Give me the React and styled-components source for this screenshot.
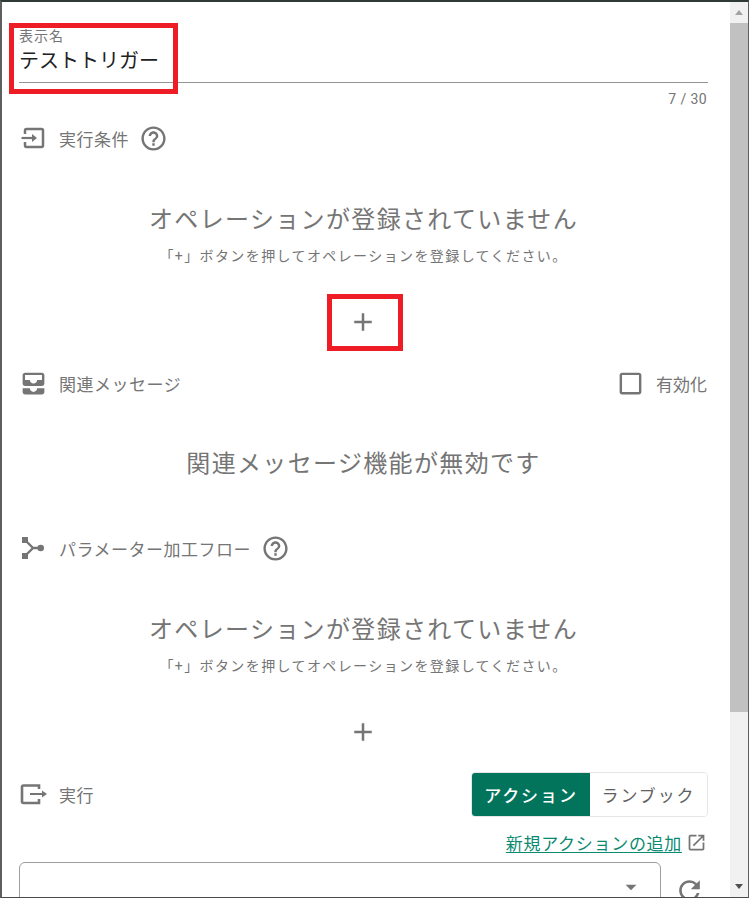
import React from "react";
import styled, { createGlobalStyle } from "styled-components";
import { MdAllInbox, MdHelpOutline, MdAdd, MdCheckBoxOutlineBlank, MdOpenInNew, MdRefresh, MdArrowDropDown } from "react-icons/md";

const Global = createGlobalStyle`
  html, body { margin: 0; padding: 0; background: #fff; }
  body { font-family: "Roboto", "Noto Sans CJK JP", sans-serif; overflow: hidden; }
`;
const Frame = styled.div`
  position: relative; width: 749px; height: 898px; box-sizing: border-box; overflow: hidden;
  display: flex; background: #fff;
  border-top: 2px solid #2f3a36; border-left: 2px solid #5f5f5f; border-bottom: 1px solid #4a4a4a; border-right: 1px solid #5f5f5f;
`;
const Content = styled.main`
  flex: 1; min-width: 0; overflow: hidden; box-sizing: border-box; padding: 0 22px 0 17px;
`;
const Scrollbar = styled.div`
  width: 18px; flex: none; background: #f1f1f1; display: flex; flex-direction: column;
`;
const ScrollBtn = styled.div`
  height: 21px; flex: none; display: flex; align-items: center; justify-content: center;
`;
const Arrow = styled.i`
  width: 0; height: 0; border-left: 4.5px solid transparent; border-right: 4.5px solid transparent;
  ${p => p.$up ? "border-bottom: 5px solid #a3a3a3;" : "border-top: 5px solid #505050;"}
`;
const Thumb = styled.div` height: 689px; flex: none; background: #c1c1c1; `;
const Track = styled.div` flex: 1; `;
const NameField = styled.div`
  height: 81px; box-sizing: border-box; border-bottom: 1px solid #949494; padding-top: 27px;
`;
const FieldLabel = styled.div`
  font-size: 14px; line-height: 15px; color: #757575; letter-spacing: 1px;
`;
const FieldValue = styled.div`
  font-size: 20px; line-height: 28px; color: #212121; margin-top: 3px;
`;
const Counter = styled.div`
  text-align: right; font-size: 14px; line-height: 16px; letter-spacing: 0.4px; color: #757575; margin: 8px 1px 0 0;
`;
const Head = styled.div`
  display: flex; align-items: center; height: 28px; color: #757575;
  margin-top: ${p => p.$top}px;
`;
const HeadIcon = styled.span`
  width: 40px; flex: none; display: flex; align-items: center; font-size: 29px; color: #757575;
`;
const HeadText = styled.span`
  font-size: 17px; letter-spacing: 0.5px; color: #757575;
`;
const Help = styled.span`
  display: flex; margin-left: 10px; font-size: 29px; color: #757575;
`;
const Spacer = styled.span` flex: 1; `;
const CheckRow = styled.span`
  display: flex; align-items: center; gap: 11px; font-size: 17px; color: #757575; padding-right: 1px;
`;
const CheckIcon = styled.span`
  display: flex; font-size: 29px; color: #757575;
`;
const Empty = styled.div`
  text-align: center; color: #757575; margin-top: ${p => p.$top}px;
`;
const EmptyTitle = styled.div`
  font-size: 24px; line-height: 34px; letter-spacing: 1.35px;
`;
const EmptySub = styled.div`
  font-size: 14px; line-height: 20px; letter-spacing: 1.4px; margin-top: 9px;
`;
const AddBtn = styled.div`
  display: flex; justify-content: center; font-size: 30px; color: #757575; margin-top: ${p => p.$top}px; padding-right: 1px;
`;
const ExecHead = styled.div`
  display: flex; align-items: center; height: 46px; margin-top: ${p => p.$top}px;
`;
const Toggle = styled.div`
  display: flex; height: 45px; border: 1px solid #e6e6e6; border-radius: 4px; box-sizing: border-box; overflow: hidden;
`;
const ToggleItem = styled.div`
  display: flex; align-items: center; justify-content: center; box-sizing: border-box; font-size: 17px; letter-spacing: 1.9px;
  width: ${p => p.$w}px;
  background: ${p => (p.$on ? "#03745c" : "#fff")};
  color: ${p => (p.$on ? "#fff" : "#616161")};
  font-weight: ${p => (p.$on ? 500 : 400)};
`;
const LinkRow = styled.div`
  display: flex; justify-content: flex-end; align-items: center; margin-top: 12px; height: 26px; gap: 4px; padding-right: 1px;
`;
const Link = styled.a`
  font-size: 17px; letter-spacing: 0.7px; color: #0a8a70; text-decoration: underline; text-underline-offset: 2px;
`;
const LinkIcon = styled.span` display: flex; font-size: 21px; color: #757575; `;
const SelectRow = styled.div`
  display: flex; margin-top: 7px; gap: 13px; padding-right: 3px;
`;
const Select = styled.div`
  flex: 1; height: 60px; box-sizing: border-box; border: 1px solid #9e9e9e; border-radius: 6px;
  display: flex; justify-content: flex-end; padding: 11px 16px 0 0; font-size: 26px; color: #757575;
`;
const Refresh = styled.span`
  width: 31px; display: flex; font-size: 31px; color: #757575; padding-top: 13px;
`;
const Mark = styled.div`
  position: absolute; box-sizing: border-box; border: 5px solid #ee1c25;
  left: ${p => p.$x}px; top: ${p => p.$y}px; width: ${p => p.$w}px; height: ${p => p.$h}px;
`;
const InputIcon = () => (
  <svg width="28" height="24" viewBox="0 0 28 24" fill="none">
    <path d="M6 8V4.500a1.500 1.500 0 0 1 1.500-1.500H22.500a1.500 1.500 0 0 1 1.500 1.500V19.500a1.500 1.500 0 0 1-1.500 1.500H7.500a1.500 1.500 0 0 1-1.500-1.500V16" stroke="#757575" strokeWidth="2.500" />
    <path d="M2.500 12H14" stroke="#757575" strokeWidth="2.200" />
    <path d="M13 8L18 12L13 16Z" fill="#757575" />
  </svg>
);
const ExitIcon = () => (
  <svg width="29" height="24" viewBox="0 0 29 24" fill="none">
    <path d="M20 7V3.500H4.500A1.500 1.500 0 0 0 3 5V19.500A1.500 1.500 0 0 0 4.500 21H20V17" stroke="#757575" strokeWidth="2.600" />
    <path d="M11 12H24" stroke="#757575" strokeWidth="2" />
    <path d="M23 8.500L28 12L23 15.500Z" fill="#757575" />
  </svg>
);
const FlowIcon = () => (
  <svg width="28" height="24" viewBox="0 0 28 24" fill="none">
    <rect x="3" y="1" width="6" height="6" fill="#757575" />
    <rect x="3" y="17" width="6" height="6" fill="#757575" />
    <circle cx="21.700" cy="12" r="3.300" fill="#757575" />
    <path d="M7 5L14 12L7 19M14 12H19" stroke="#757575" strokeWidth="2.400" />
  </svg>
);
const Section = ({ top }) => (
  <Empty $top={top}>
    <EmptyTitle>オペレーションが登録されていません</EmptyTitle>
    <EmptySub>「+」ボタンを押してオペレーションを登録してください。</EmptySub>
  </Empty>
);
export default function App() {
  return (
    <Frame>
      <Global />
      <Content>
        <NameField>
          <FieldLabel>表示名</FieldLabel>
          <FieldValue>テストトリガー</FieldValue>
        </NameField>
        <Counter>7 / 30</Counter>
        <Head $top={17}>
          <HeadIcon><InputIcon /></HeadIcon>
          <HeadText>実行条件</HeadText>
          <Help><MdHelpOutline /></Help>
        </Head>
        <Section top={51} />
        <AddBtn $top={41}><MdAdd /></AddBtn>
        <Head $top={32}>
          <HeadIcon><MdAllInbox /></HeadIcon>
          <HeadText>関連メッセージ</HeadText>
          <Spacer />
          <CheckRow><CheckIcon><MdCheckBoxOutlineBlank /></CheckIcon>有効化</CheckRow>
        </Head>
        <Empty $top={50}><EmptyTitle>関連メッセージ機能が無効です</EmptyTitle></Empty>
        <Head $top={53}>
          <HeadIcon><FlowIcon /></HeadIcon>
          <HeadText>パラメーター加工フロー</HeadText>
          <Help><MdHelpOutline /></Help>
        </Head>
        <Section top={51} />
        <AddBtn $top={41}><MdAdd /></AddBtn>
        <ExecHead $top={24}>
          <HeadIcon><ExitIcon /></HeadIcon>
          <HeadText>実行</HeadText>
          <Spacer />
          <Toggle>
            <ToggleItem $on $w={118}>アクション</ToggleItem>
            <ToggleItem $w={117}>ランブック</ToggleItem>
          </Toggle>
        </ExecHead>
        <LinkRow>
          <Link>新規アクションの追加</Link>
          <LinkIcon><MdOpenInNew /></LinkIcon>
        </LinkRow>
        <SelectRow>
          <Select><MdArrowDropDown /></Select>
          <Refresh><MdRefresh /></Refresh>
        </SelectRow>
      </Content>
      <Scrollbar>
        <ScrollBtn><Arrow $up /></ScrollBtn>
        <Thumb />
        <Track />
        <ScrollBtn><Arrow /></ScrollBtn>
      </Scrollbar>
      <Mark $x={7} $y={21} $w={169} $h={71} />
      <Mark $x={325} $y={292} $w={76} $h={57} />
    </Frame>
  );
}
